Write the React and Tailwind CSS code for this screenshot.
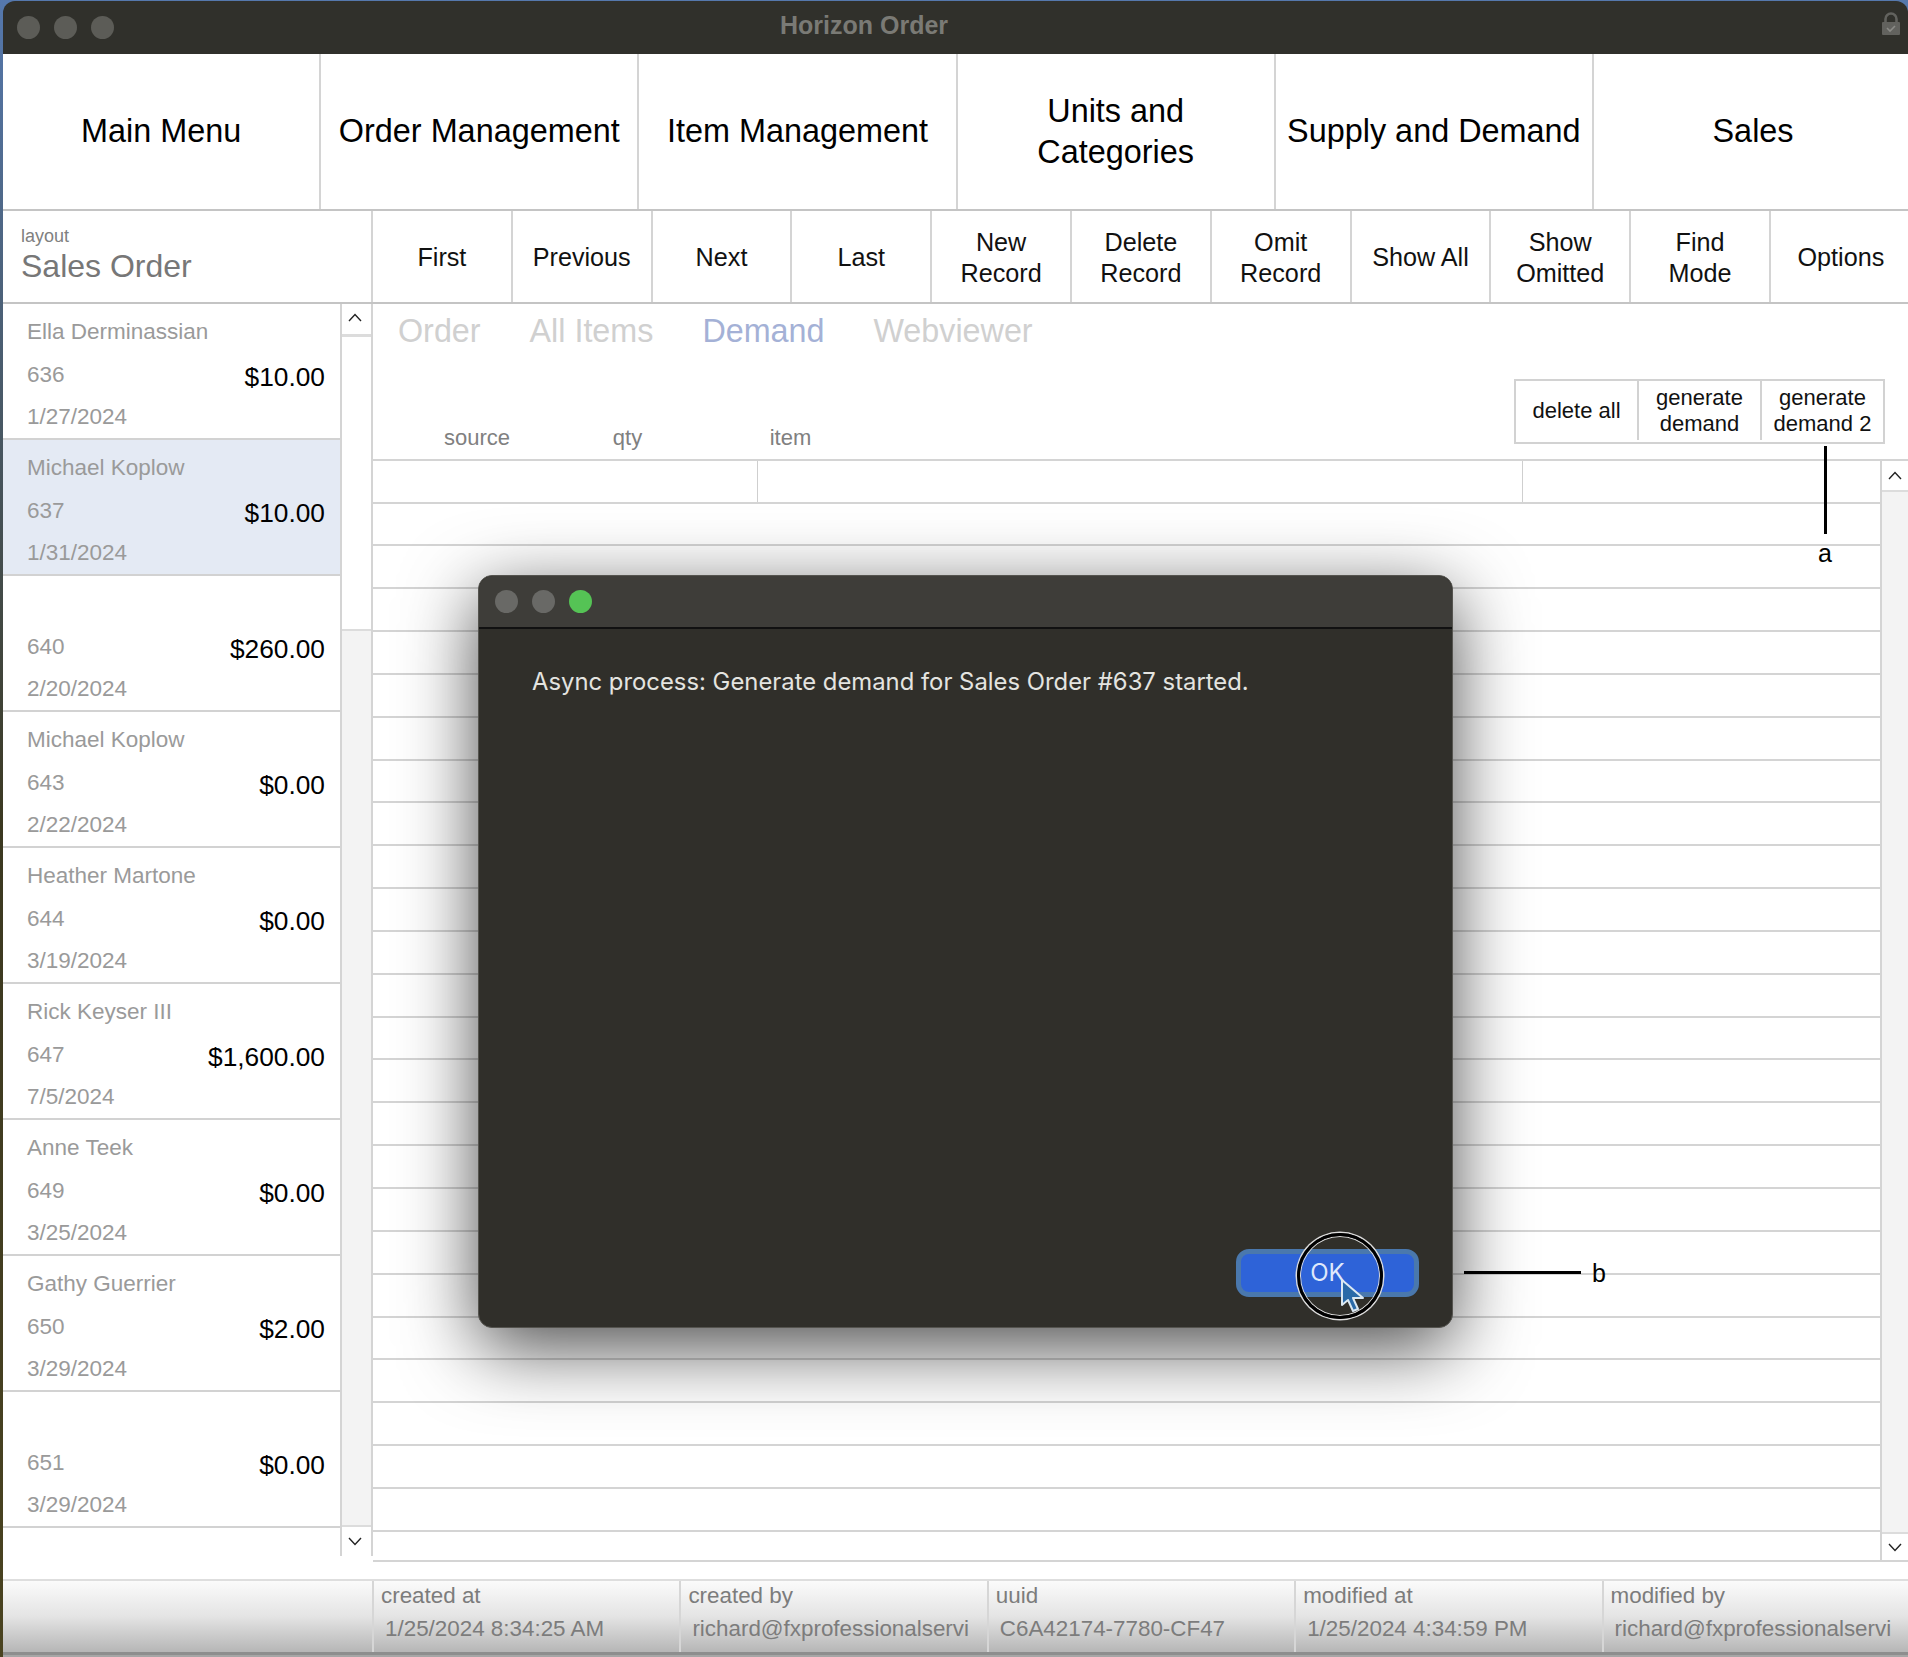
import React from "react";

const navItems = ["Main Menu", "Order Management", "Item Management", "Units and Categories", "Supply and Demand", "Sales"];
const toolItems = ["First", "Previous", "Next", "Last", "New Record", "Delete Record", "Omit Record", "Show All", "Show Omitted", "Find Mode", "Options"];
const orders = [
  { name: "Ella Derminassian", no: "636", total: "$10.00", date: "1/27/2024" },
  { name: "Michael Koplow", no: "637", total: "$10.00", date: "1/31/2024", selected: true },
  { name: "", no: "640", total: "$260.00", date: "2/20/2024" },
  { name: "Michael Koplow", no: "643", total: "$0.00", date: "2/22/2024" },
  { name: "Heather Martone", no: "644", total: "$0.00", date: "3/19/2024" },
  { name: "Rick Keyser III", no: "647", total: "$1,600.00", date: "7/5/2024" },
  { name: "Anne Teek", no: "649", total: "$0.00", date: "3/25/2024" },
  { name: "Gathy Guerrier", no: "650", total: "$2.00", date: "3/29/2024" },
  { name: "", no: "651", total: "$0.00", date: "3/29/2024" },
];
const footerCells = [
  { label: "created at", value: "1/25/2024 8:34:25 AM" },
  { label: "created by", value: "richard@fxprofessionalservi" },
  { label: "uuid", value: "C6A42174-7780-CF47" },
  { label: "modified at", value: "1/25/2024 4:34:59 PM" },
  { label: "modified by", value: "richard@fxprofessionalservi" },
];
const gridRows = Array.from({ length: 24 }, (_, i) => i);

const Caret = ({ down }) => (
  <svg width="14" height="9" viewBox="0 0 14 9" fill="none" stroke="#222" strokeWidth="1.4">
    <polyline points={down ? "1,1 7,7.5 13,1" : "1,8 7,1.5 13,8"} />
  </svg>
);

const Lock = () => (
  <svg width="20" height="24" viewBox="0 0 20 24">
    <path d="M4.5 11V7a5.5 5.5 0 0 1 11 0v4" fill="none" stroke="#62625e" strokeWidth="2.6" />
    <rect x="1" y="10" width="18" height="13" rx="1" fill="#62625e" />
    <polyline points="6,16 9,19 14,14" fill="none" stroke="#8b8b87" strokeWidth="1.6" />
  </svg>
);

const OrderRow = ({ order }) => (
  <div className={`flex h-[136px] shrink-0 items-center justify-between border-b-2 border-[#d2d2d2] pl-[24px] pr-[15px] text-[#9a9a9a] ${order.selected ? "bg-[#e4eaf4]" : "bg-white"}`}>
    <div className="flex h-full flex-col pt-[14px] text-[22.5px] leading-[28px]">
      <div className="h-[28px]">{order.name}</div>
      <div className="mt-[15px]">{order.no}</div>
      <div className="mt-[14px]">{order.date}</div>
    </div>
    <div className="mt-[11px] text-[26.3px] leading-[30px] text-black">{order.total}</div>
  </div>
);

export default function App() {
  return (
    <div className="relative flex h-[1657px] w-[1908px] flex-col overflow-hidden bg-gradient-to-b from-[#5578ad] via-[#3b3820] to-[#4a4320] pl-[3px] pt-[1px] font-['Liberation_Sans',Arial,sans-serif]">
      {/* title bar */}
      <div className="flex h-[53px] shrink-0 items-center rounded-t-[12px] bg-[#30302b] pl-[14px] pr-[7px]">
        <div className="flex gap-[14px]">
          <div className="h-[23px] w-[23px] rounded-full bg-[#5c5c57]" />
          <div className="h-[23px] w-[23px] rounded-full bg-[#5c5c57]" />
          <div className="h-[23px] w-[23px] rounded-full bg-[#5c5c57]" />
        </div>
        <div className="-mt-[3px] ml-[666px] text-[25px] font-bold text-[#7a7a75]">Horizon Order</div>
        <div className="ml-auto -mt-[8px]"><Lock /></div>
      </div>

      {/* main nav */}
      <div className="grid h-[157px] shrink-0 grid-cols-[repeat(6,318.2px)] border-b-2 border-[#c4c4c4] bg-white">
        {navItems.map((item, i) => (
          <div key={item} className={`flex items-center justify-center px-[8px] text-center text-[32.4px] leading-[41px] text-black ${i < 5 ? "border-r-2 border-[#d4d4d4]" : ""}`}>
            {item === "Units and Categories" ? <span className="w-[180px]">{item}</span> : item}
          </div>
        ))}
      </div>

      {/* toolbar */}
      <div className="flex h-[93px] shrink-0 border-b-2 border-[#c4c4c4] bg-white">
        <div className="flex w-[370px] shrink-0 flex-col border-r-2 border-[#d4d4d4] pl-[18px] pt-[14px]">
          <div className="text-[18px] leading-[22px] text-[#808080]">layout</div>
          <div className="text-[32px] leading-[38px] text-[#777777]">Sales Order</div>
        </div>
        <div className="grid flex-1 grid-cols-[repeat(11,139.8px)]">
          {toolItems.map((item, i) => (
            <div key={item} className={`flex items-center justify-center px-[14px] pt-[2px] text-center text-[25.2px] leading-[31px] text-[#111] ${i < 10 ? "border-r-2 border-[#d4d4d4]" : ""}`}>
              {item}
            </div>
          ))}
        </div>
      </div>

      {/* body */}
      <div className="flex h-[1275px] shrink-0 bg-white">
        <div className="w-[337px] shrink-0">
          {orders.map((order) => (
            <OrderRow key={order.no} order={order} />
          ))}
        </div>
        <div className="flex h-[1252px] w-[33px] shrink-0 flex-col border-x-2 border-[#d4d4d4]">
          <div className="flex h-[33px] shrink-0 items-center justify-center border-b-[3px] border-[#dcdcdc] pb-[4px] pr-[3px]"><Caret /></div>
          <div className="h-[294px] shrink-0 border-b-2 border-[#dcdcdc] bg-white" />
          <div className="flex-1 bg-[#f3f3f3]" />
          <div className="flex h-[31px] shrink-0 items-center justify-center border-t-2 border-[#dcdcdc] pr-[3px]"><Caret down /></div>
        </div>

        <div className="flex min-w-0 flex-1 flex-col">
          <div className="mt-[8px] flex gap-[49px] pl-[25px] text-[32.3px] leading-[38px] text-[#d0d0d0]">
            <span>Order</span>
            <span>All Items</span>
            <span className="text-[#a4b1d6]">Demand</span>
            <span>Webviewer</span>
          </div>
          <div className="flex h-[109px] shrink-0 items-end">
            <div className="flex pb-[8px] text-center text-[22px] leading-[26px] text-[#808080]">
              <div className="w-[208px]">source</div>
              <div className="w-[93px]">qty</div>
              <div className="w-[233px]">item</div>
            </div>
            <div className="mb-[15px] ml-auto mr-[23px] flex h-[65px] border-2 border-[#d2d2d2] pb-[2px] text-center text-[22px] leading-[25.5px] text-[#111]">
              <div className="flex w-[123px] items-center justify-center border-r-2 border-[#d2d2d2]">delete all</div>
              <div className="flex w-[123px] items-center justify-center border-r-2 border-[#d2d2d2]">generate demand</div>
              <div className="flex w-[121px] items-center justify-center">generate demand 2</div>
            </div>
          </div>

          {/* demand portal */}
          <div className="flex h-[1103px] shrink-0 border-y-2 border-[#d4d4d4]">
            <div className="min-w-0 flex-1">
              <div className="flex h-[42.5px] border-b-2 border-[#d4d4d4]">
                <div className="w-[385px] border-r border-[#cfcfcf]" />
                <div className="w-[765px] border-r border-[#cfcfcf]" />
              </div>
              {gridRows.map((row) => (
                <div key={row} className="h-[42.85px] border-b-2 border-[#d4d4d4]" />
              ))}
            </div>
            <div className="flex w-[28px] shrink-0 flex-col border-l-2 border-[#d4d4d4]">
              <div className="flex h-[31px] shrink-0 items-center justify-center border-b-2 border-[#dcdcdc]"><Caret /></div>
              <div className="flex-1 bg-[#f3f3f3]" />
              <div className="flex h-[28px] shrink-0 items-center justify-center border-t-2 border-[#dcdcdc]"><Caret down /></div>
            </div>
          </div>
        </div>
      </div>

      {/* status footer */}
      <div className="flex h-[73px] shrink-0 border-t-2 border-[#dedede] bg-gradient-to-b from-[#fbfbfb] via-[#e4e4e4] to-[#b6b6b6]">
        <div className="w-[369px] shrink-0" />
        {footerCells.map((cell) => (
          <div key={cell.label} className="w-[307.4px] shrink-0 overflow-hidden whitespace-nowrap border-l-2 border-[#d6d6d6] pl-[7px] pt-[1px] text-[22.4px] leading-[28px] text-[#7c7c7c]">
            <div>{cell.label}</div>
            <div className="mt-[5px] pl-[4px]">{cell.value}</div>
          </div>
        ))}
      </div>
      <div className="flex-1 border-t-[3px] border-[#8e8e8e] bg-[#a6a6a6]" />

      {/* annotation a */}
      <div className="absolute left-[1824px] top-[446px] h-[88px] w-[3px] bg-black" />
      <div className="absolute left-[1818px] top-[539px] text-[25px] leading-[28px] text-black">a</div>

      {/* async dialog */}
      <div className="absolute left-[478px] top-[575px] flex h-[753px] w-[975px] flex-col overflow-visible rounded-[14px] border border-[#55544f] bg-[#302f2a] shadow-[0_20px_75px_rgba(0,0,0,0.7)]">
        <div className="flex h-[53px] shrink-0 items-center gap-[14px] rounded-t-[14px] border-b-2 border-[#111] bg-[#3e3d39] pl-[16px]">
          <div className="h-[23px] w-[23px] rounded-full bg-[#696966]" />
          <div className="h-[23px] w-[23px] rounded-full bg-[#696966]" />
          <div className="h-[23px] w-[23px] rounded-full bg-[#55c355]" />
        </div>
        <div className="pl-[53px] pt-[38px] font-['Inter',sans-serif] text-[23.85px] leading-[30px] text-[#e4e4e0]">
          Async process: Generate demand for Sales Order #637 started.
        </div>
        <div className="relative mb-[30px] mr-[33px] mt-auto flex h-[48px] w-[183px] items-center justify-center self-end rounded-[13px] border-[5px] border-[#4a78ad] bg-[#2e63d8] font-['Inter',sans-serif] text-[24px] text-[#dfe8fb]">
          OK
          <div className="absolute left-[56px] top-[-21px] h-[86px] w-[86px] rounded-full border-[3px] border-black shadow-[0_0_0_1.5px_#dcdcdc,inset_0_0_0_1px_#dcdcdc]" />
          <svg className="absolute left-[100px] top-[25px] overflow-visible" width="24" height="34" viewBox="0 0 24 34">
            <path d="M1 1 L1 26 L7 21 L12 32 L17 30 L12 19 L22 19 Z" fill="#2a6aa8" stroke="#dbe8f2" strokeWidth="2" strokeLinejoin="round" />
          </svg>
        </div>
      </div>

      {/* annotation b */}
      <div className="absolute left-[1464px] top-[1271px] h-[3px] w-[117px] bg-black" />
      <div className="absolute left-[1592px] top-[1259px] text-[25px] leading-[28px] text-black">b</div>
    </div>
  );
}
